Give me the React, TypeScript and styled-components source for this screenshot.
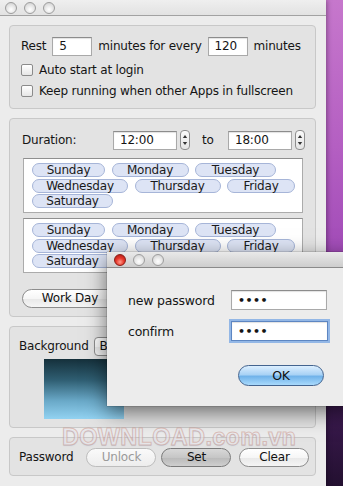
import * as React from "react";
import styled, { createGlobalStyle, css } from "styled-components";

const GlobalStyle = createGlobalStyle`
	html, body {
		margin: 0;
		padding: 0;
	}
	body {
		width: 343px;
		height: 486px;
		overflow: hidden;
		font-family: "DejaVu Sans", "Lucida Grande", sans-serif;
		font-size: 12px;
		letter-spacing: -0.2px;
		color: #151515;
	}
`;

const Screen = styled.div`
	position: relative;
	display: flex;
	width: 343px;
	height: 486px;
	overflow: hidden;
	background: linear-gradient(
		180deg,
		#c677cc 0%,
		#b45fc2 30%,
		#a24cb8 52%,
		#6c2c88 68%,
		#3c1a50 84%,
		#231030 100%
	);
`;

const Window = styled.div`
	width: 326px;
	height: 100%;
	flex-shrink: 0;
	display: flex;
	flex-direction: column;
	background: #ececec;
	box-shadow: 1px 0 5px rgba(0, 0, 0, 0.35);
`;

const TitleBar = styled.div`
	height: 15px;
	flex-shrink: 0;
	display: flex;
	align-items: center;
	gap: 7px;
	padding-left: 5px;
	background: linear-gradient(#efefef, #e2e2e2);
	border-bottom: 1px solid #a2a2a2;
`;

const Light = styled.span<{ $red?: boolean }>`
	width: 10px;
	height: 10px;
	border-radius: 50%;
	border: 1px solid #9d9d9d;
	background: radial-gradient(circle at 50% 65%, #ffffff 0%, #e9e9e9 45%, #c9c9c9 100%);
	${({ $red }) =>
		$red &&
		css`
			border-color: #8a1c14;
			background: radial-gradient(circle at 50% 70%, #ff9c8c 0%, #e8392c 45%, #a81610 100%);
		`}
`;

const Content = styled.div`
	display: flex;
	flex-direction: column;
	gap: 9px;
	padding: 9px 10px 0 9px;
`;

const Group = styled.div<{ $pad: string }>`
	background: #e3e3e3;
	border: 1px solid #c8c8c8;
	border-radius: 4px;
	padding: ${({ $pad }) => $pad};
`;

const Row = styled.div<{ $gap?: number; $top?: number }>`
	display: flex;
	align-items: center;
	height: 18px;
	gap: ${({ $gap }) => $gap ?? 0}px;
	margin-top: ${({ $top }) => $top ?? 0}px;
	white-space: nowrap;
`;

const Field = styled.div<{ $w: number; $h?: number; $focus?: boolean }>`
	box-sizing: border-box;
	width: ${({ $w }) => $w}px;
	height: ${({ $h }) => $h ?? 19}px;
	padding-left: 6px;
	display: flex;
	align-items: center;
	background: #fff;
	border: 1px solid #a9a9a9;
	border-top-color: #8c8c8c;
	box-shadow: inset 0 1px 1px rgba(0, 0, 0, 0.12);
	${({ $focus }) =>
		$focus &&
		css`
			border-color: #5d86c2;
			box-shadow: 0 0 0 2px #93b7e6, inset 0 1px 1px rgba(0, 0, 0, 0.12);
		`}
`;

const Dots = styled.span`
	font-weight: bold;
	font-size: 11px;
	letter-spacing: 0.5px;
`;

const Check = styled.span`
	width: 10px;
	height: 10px;
	margin-right: 6px;
	border-radius: 2px;
	border: 1px solid #8b8b8b;
	background: linear-gradient(#ffffff, #e6e6e6);
`;

const Label = styled.span<{ $w?: number; $ml?: number }>`
	display: inline-block;
	width: ${({ $w }) => ($w ? `${$w}px` : "auto")};
	margin-left: ${({ $ml }) => $ml ?? 0}px;
`;

const Stepper = styled.span`
	width: 8px;
	height: 18px;
	margin-left: 3px;
	display: flex;
	align-items: center;
	justify-content: center;
	border: 1px solid #8e8e8e;
	border-radius: 4px;
	background: linear-gradient(#fafafa, #e4e4e4);
`;

const DaysBox = styled.div<{ $top: number }>`
	box-sizing: border-box;
	width: 280px;
	height: 55px;
	margin-top: ${({ $top }) => $top}px;
	margin-left: 1px;
	padding: 4px 0 0 8px;
	display: flex;
	flex-wrap: wrap;
	align-content: flex-start;
	column-gap: 6.5px;
	row-gap: 1.5px;
	background: #fff;
	border: 1px solid #ababab;
	border-top-color: #8f8f8f;
`;

const Pill = styled.span<{ $w: number }>`
	box-sizing: border-box;
	width: ${({ $w }) => $w}px;
	height: 14px;
	display: flex;
	align-items: center;
	justify-content: center;
	line-height: 1;
	background: #dde4f5;
	border: 1px solid #a6b5d8;
	border-radius: 8px;
	color: #1a1a1a;
`;

const Button = styled.span<{
	$w?: number;
	$variant?: "pressed" | "disabled" | "square";
	$ml?: number;
}>`
	box-sizing: border-box;
	width: ${({ $w }) => ($w ? `${$w}px` : "auto")};
	height: 19px;
	margin-left: ${({ $ml }) => $ml ?? 0}px;
	padding: 0 5px;
	display: flex;
	align-items: center;
	justify-content: center;
	border-radius: 10px;
	border: 1px solid #8d8d8d;
	background: linear-gradient(#ffffff 0%, #f6f6f6 50%, #e8e8e8 51%, #f5f5f5 100%);
	color: #111;
	${({ $variant }) =>
		$variant === "pressed" &&
		css`
			border-color: #7a7a7a;
			background: linear-gradient(#d8d8d8 0%, #c6c6c6 50%, #b9b9b9 51%, #cfcfcf 100%);
		`}
	${({ $variant }) =>
		$variant === "disabled" &&
		css`
			border-color: #bdbdbd;
			color: #9a9a9a;
			background: linear-gradient(#fafafa, #ededed);
		`}
	${({ $variant }) =>
		$variant === "square" &&
		css`
			border-radius: 4px;
			justify-content: flex-start;
		`}
`;

const Thumb = styled.div`
	width: 80px;
	height: 60px;
	margin: 4px 0 0 25px;
	background: linear-gradient(180deg, #15303b 0%, #2f5e72 35%, #6aa9c8 70%, #92d2f1 100%);
`;

const Dialog = styled.div`
	position: absolute;
	left: 107px;
	top: 252px;
	width: 250px;
	height: 154px;
	background: #ececec;
	box-shadow: 0 6px 20px rgba(0, 0, 0, 0.55), 0 0 1px rgba(0, 0, 0, 0.6);
	z-index: 2;
`;

const DialogBar = styled(TitleBar)`
	padding-left: 7px;
	background: linear-gradient(#e9e9e9, #cdcdcd);
	border-bottom-color: #8a8a8a;
`;

const DialogBody = styled.div`
	padding: 22px 0 0 21px;
	display: grid;
	grid-template-columns: 103px 97px;
	row-gap: 11px;
	align-items: center;
	font-size: 12.5px;
`;

const OkButton = styled.span`
	grid-column: 1 / 3;
	margin: 13px 0 0 110px;
	box-sizing: border-box;
	width: 86px;
	height: 21px;
	display: flex;
	align-items: center;
	justify-content: center;
	border-radius: 11px;
	border: 1px solid #44648f;
	background: linear-gradient(#dcefff 0%, #a9d2f5 45%, #71b3ea 55%, #a9dafc 100%);
	color: #111;
`;

const Watermark = styled.div`
	position: absolute;
	left: 62px;
	top: 428px;
	height: 18px;
	font-family: "Liberation Sans", Arial, sans-serif;
	font-weight: bold;
	font-size: 23.5px;
	letter-spacing: 0.3px;
	line-height: 18px;
	color: rgba(250, 245, 245, 0.55);
	-webkit-text-stroke: 1px rgba(196, 140, 130, 0.5);
	text-shadow: 0 1px 1px rgba(120, 150, 190, 0.25);
	pointer-events: none;
	z-index: 3;
`;

const Arrows = () => (
	<svg width="6" height="12" viewBox="0 0 6 12">
		<path d="M3 1 L5.2 4 H0.8 Z" fill="#333" />
		<path d="M3 11 L5.2 8 H0.8 Z" fill="#333" />
	</svg>
);

const days: [string, number][] = [
	["Sunday", 73],
	["Monday", 77],
	["Tuesday", 81],
	["Wednesday", 96],
	["Thursday", 86],
	["Friday", 68],
	["Saturday", 81],
];

const Days = ({ top }: { top: number }) => (
	<DaysBox $top={top}>
		{days.map(([d, w]) => (
			<Pill key={d} $w={w}>
				{d}
			</Pill>
		))}
	</DaysBox>
);

export default function App() {
	return (
		<>
			<GlobalStyle />
			<Screen>
				<Window>
					<TitleBar>
						<Light />
						<Light />
						<Light />
					</TitleBar>
					<Content>
						<Group $pad="11px 0 8px 11px">
							<Row $gap={6}>
								<span>Rest</span>
								<Field $w={40}>5</Field>
								<span>minutes for every</span>
								<Field $w={40}>120</Field>
								<span>minutes</span>
							</Row>
							<Row $top={6}>
								<Check />
								<span>Auto start at login</span>
							</Row>
							<Row $top={3}>
								<Check />
								<span>Keep running when other Apps in fullscreen</span>
							</Row>
						</Group>
						<Group $pad="12px 0 9px 12px">
							<Row>
								<Label $w={91}>Duration:</Label>
								<Field $w={64}>12:00</Field>
								<Stepper>
									<Arrows />
								</Stepper>
								<Label $ml={12} $w={26}>
									to
								</Label>
								<Field $w={64}>18:00</Field>
								<Stepper>
									<Arrows />
								</Stepper>
							</Row>
							<Days top={9} />
							<Days top={5} />
							<Row $top={16}>
								<Button $w={96}>Work Day</Button>
							</Row>
						</Group>
						<Group $pad="10px 0 8px 9px">
							<Row>
								<span>Background</span>
								<Button $ml={5} $variant="square">
									Browse…
								</Button>
							</Row>
							<Thumb />
						</Group>
						<Group $pad="10px 0 9px 9px">
							<Row>
								<span>Password</span>
								<Button $w={70} $ml={13} $variant="disabled">
									Unlock
								</Button>
								<Button $w={70} $ml={5} $variant="pressed">
									Set
								</Button>
								<Button $w={70} $ml={8}>
									Clear
								</Button>
							</Row>
						</Group>
					</Content>
				</Window>
				<Dialog>
					<DialogBar>
						<Light $red />
						<Light />
						<Light />
					</DialogBar>
					<DialogBody>
						<span>new password</span>
						<Field $w={96} $h={20}>
							<Dots>••••</Dots>
						</Field>
						<span>confirm</span>
						<Field $w={97} $h={20} $focus>
							<Dots>••••</Dots>
						</Field>
						<OkButton>OK</OkButton>
					</DialogBody>
				</Dialog>
				<Watermark>DOWNLOAD.com.vn</Watermark>
			</Screen>
		</>
	);
}
